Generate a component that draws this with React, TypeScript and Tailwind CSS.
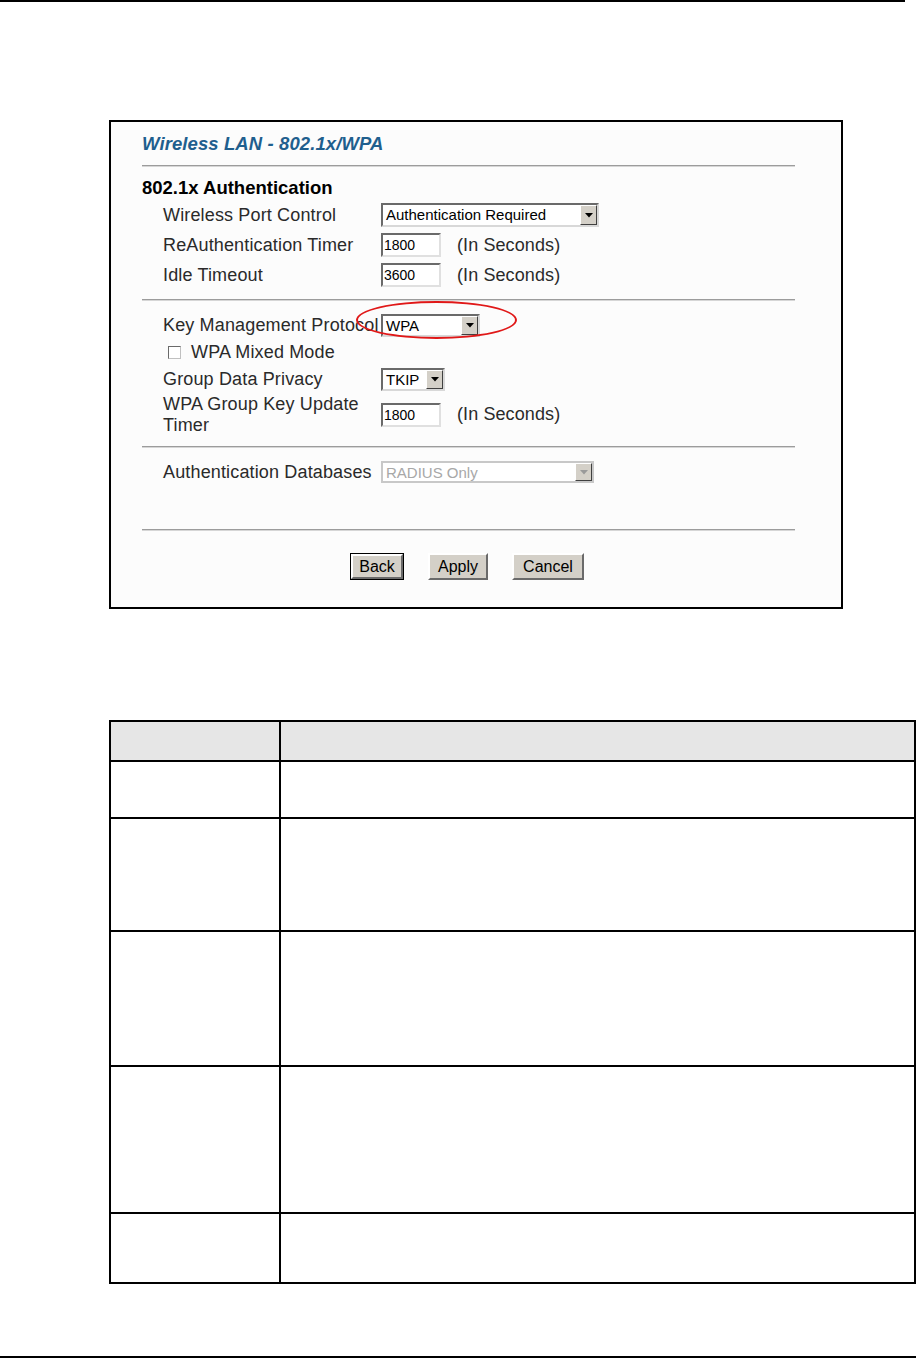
import React from 'react'

const font = { fontFamily: '"Liberation Sans", Arial, sans-serif' }

function Arrow({ disabled }: { disabled?: boolean }) {
  return (
    <div className="flex h-full w-[17px] items-center justify-center border border-t-white border-l-white border-r-[#404040] border-b-[#404040] bg-[#d4d0c8]">
      <svg width="8" height="5" viewBox="0 0 8 5">
        <path d="M0 0h8L4 4.5z" fill={disabled ? '#9a9a9a' : '#000'} />
      </svg>
    </div>
  )
}

function Select({ value, w, h = 'h-[24px]', disabled }: { value: string; w: string; h?: string; disabled?: boolean }) {
  return (
    <div
      className={`${w} ${h} flex items-stretch border-2 ${disabled ? 'border-[#c8c8c8]' : 'border-t-[#6a6a6a] border-l-[#6a6a6a] border-r-[#d8d8d8] border-b-[#d8d8d8]'} bg-white`}
    >
      <span className={`flex-1 pl-[3px] text-[15px] leading-[20px] ${disabled ? 'text-[#a8a8a8]' : 'text-black'}`}>{value}</span>
      <Arrow disabled={disabled} />
    </div>
  )
}

function TextBox({ value }: { value: string }) {
  return (
    <div className="h-[24px] w-[60px] border-2 border-t-[#6a6a6a] border-l-[#6a6a6a] border-r-[#e0e0e0] border-b-[#e0e0e0] bg-white pl-[1px] text-[14px] leading-[20px] text-black">
      {value}
    </div>
  )
}

function Rule() {
  return <div className="h-[2px] border-t border-b border-t-[#9c9c9c] border-b-[#d6d6d6]" />
}

function Row({ label, h = 'h-[30px]', children }: { label: React.ReactNode; h?: string; children: React.ReactNode }) {
  return (
    <div className={`${h} flex items-center pl-[21px]`}>
      <div className="w-[218px] shrink-0 text-[18px] leading-[21px] tracking-[0.15px] text-[#2a2a2a] whitespace-nowrap">{label}</div>
      <div className="flex items-center">{children}</div>
    </div>
  )
}

const Seconds = () => <span className="ml-[16px] text-[18px] tracking-[0.1px] text-[#2a2a2a]">(In Seconds)</span>

function Button({ label, w, isDefault }: { label: string; w: string; isDefault?: boolean }) {
  return (
    <div className={`${w} h-[27px] ${isDefault ? 'border border-black' : ''}`}>
      <div className="flex h-full items-center justify-center border-2 border-t-white border-l-white border-r-[#6a6a6a] border-b-[#6a6a6a] bg-[#d4d0c8] text-[16px] text-black">
        {label}
      </div>
    </div>
  )
}

export default function App() {
  const rows = ['h-[57px]', 'h-[113px]', 'h-[135px]', 'h-[147px]', 'h-[70px]']
  return (
    <div className="min-h-[1358px] w-[916px] bg-white" style={font}>
      <div className="h-[2px] w-[905px] bg-black" />

      <div className="relative ml-[109px] mt-[118px] h-[489px] w-[734px] border-2 border-black bg-[#fcfcfc] pl-[31px] pt-[10px]">
        <div className="w-[653px]">
          <div className="h-[24px] text-[18.5px] font-bold italic leading-[24px] tracking-[0.1px] text-[#1f5f8e]">Wireless LAN - 802.1x/WPA</div>
          <div className="mt-[9px]"><Rule /></div>

          <div className="mt-[10px] h-[22px] text-[18.5px] font-bold leading-[22px] text-black">802.1x Authentication</div>
          <div className="mt-[1px]">
            <Row label="Wireless Port Control">
              <Select value="Authentication Required" w="w-[218px]" />
            </Row>
            <Row label="ReAuthentication Timer">
              <TextBox value="1800" />
              <Seconds />
            </Row>
            <Row label="Idle Timeout">
              <TextBox value="3600" />
              <Seconds />
            </Row>
          </div>
          <div className="mt-[9px]"><Rule /></div>

          <div className="mt-[11px]">
            <Row label="Key Management Protocol" h="h-[27px]">
              <Select value="WPA" w="w-[99px]" h="h-[23px]" />
            </Row>
            <div className="flex h-[27px] items-center pl-[26px]">
              <div className="h-[13px] w-[13px] border border-t-[#6a6a6a] border-l-[#6a6a6a] border-r-[#c0c0c0] border-b-[#c0c0c0] bg-white" />
              <span className="ml-[10px] text-[18px] tracking-[0.15px] text-[#2a2a2a]">WPA Mixed Mode</span>
            </div>
            <Row label="Group Data Privacy" h="h-[27px]">
              <Select value="TKIP" w="w-[64px]" h="h-[23px]" />
            </Row>
            <div className="flex h-[43px] items-center pl-[21px]">
              <div className="w-[205px] shrink-0 text-[18px] leading-[21px] tracking-[0.15px] text-[#2a2a2a]">WPA Group Key Update Timer</div>
              <div className="ml-[13px] flex items-center">
                <TextBox value="1800" />
                <Seconds />
              </div>
            </div>
          </div>
          <div className="mt-[10px]"><Rule /></div>

          <div className="mt-[11px]">
            <Row label="Authentication Databases" h="h-[26px]">
              <Select value="RADIUS Only" w="w-[213px]" h="h-[22px]" disabled />
            </Row>
          </div>
          <div className="mt-[44px]"><Rule /></div>

          <div className="ml-[208px] mt-[22px] flex gap-[24px]">
            <Button label="Back" w="w-[54px]" isDefault />
            <Button label="Apply" w="w-[60px]" />
            <Button label="Cancel" w="w-[72px]" />
          </div>
        </div>

        <div className="pointer-events-none absolute left-[245px] top-[179px] h-[38px] w-[161px] rounded-[50%] border-2 border-[#e01818]" />
      </div>

      <table className="ml-[109px] mt-[111px] w-[807px] border-collapse">
        <tbody>
          <tr className="h-[40px] bg-[#e6e6e6]">
            <td className="w-[170px] border-2 border-black" />
            <td className="border-2 border-black" />
          </tr>
          {rows.map((h, i) => (
            <tr key={i} className={h}>
              <td className="border-2 border-black" />
              <td className="border-2 border-black" />
            </tr>
          ))}
        </tbody>
      </table>

      <div className="mt-[72px] h-[2px] w-full bg-black" />
    </div>
  )
}
